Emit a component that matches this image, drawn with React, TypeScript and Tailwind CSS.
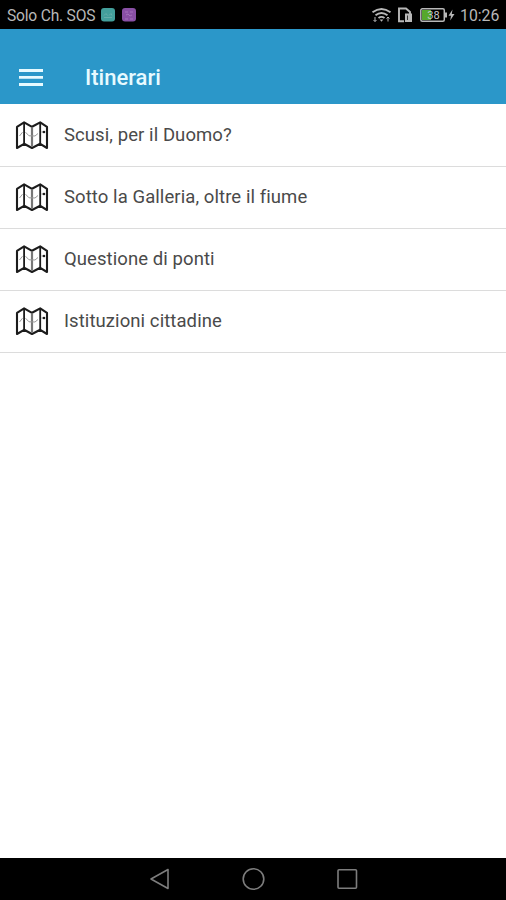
const itineraries = [
  'Scusi, per il Duomo?',
  'Sotto la Galleria, oltre il fiume',
  'Questione di ponti',
  'Istituzioni cittadine',
];

function MapIcon() {
  return (
    <svg className="block shrink-0" width="34" height="30" viewBox="0 0 34 30" fill="none" stroke="#1c1c1c" strokeWidth="2.1" strokeLinejoin="round">
      <path d="M2 6.8 9.1 2.4 17 6.8 25.2 2.4 32 6.8V28L25.2 23.8 17 28 9.1 23.8 2 28Z" />
      <path d="M9.1 2.5V24M25.2 2.5V24" strokeWidth="1.8" />
      <path d="M17 7.5V27" stroke="#777" strokeWidth="2.2" />
      <path d="M4.5 16 7.5 12.2M10.5 12.2 14 15.8 20 16 23 13.5" stroke="#999" strokeWidth="1" />
      <path d="M26.5 12H28.5" stroke="#888" strokeWidth="1" />
      <circle cx="29" cy="12" r="1.3" fill="#1c1c1c" stroke="none" />
    </svg>
  );
}

function StatusBar() {
  return (
    <div className="flex h-[29px] shrink-0 items-center bg-black pl-[7px] pr-[6px] text-[#b8b8b8]">
      <span className="mt-[3px] w-[94px] whitespace-nowrap text-[15.6px] leading-[16px] tracking-[-0.2px]">Solo Ch. SOS</span>
      <svg className="block" width="36" height="16" viewBox="0 0 36 16">
        <rect x="0" y="1" width="14" height="13.5" rx="3" fill="#439f9b" />
        <path d="M3 8.5 5 6.5 6.5 8.5M8 8.5 10 6.5 11 8.5M3 10.5H11" stroke="#66aeaa" fill="none" />
        <rect x="21" y="1" width="14" height="13.5" rx="3" fill="#8950a5" />
        <path d="M24 5H27M29 5H32M25 8 27 7 29 9 31 8M24 12H27M29 12H32" stroke="#a573bc" fill="none" />
      </svg>
      <svg className="ml-auto mr-[5px] block shrink-0" width="84" height="18" viewBox="0 0 84 18" fill="none" stroke="#b8b8b8">
        <path d="M1.5 6.3Q10.5-.3 19.5 6.3M4.5 9.2Q10.5 4.6 16.5 9.2M7.5 12Q10.5 9.8 13.5 12" strokeWidth="1.9" />
        <path d="M8.7 13.5H12.3L10.5 15.8Z" fill="#b8b8b8" stroke="none" />
        <path d="M4 11V15.5M2.5 14 4 15.5 5.5 14M17 15.5V11M15.5 12.5 17 11 18.5 12.5" strokeWidth="1" />
        <path d="M33 15.2H28V2.5H35L39 6V8" strokeWidth="1.9" />
        <path d="M34 7.5H41V16H34Z" fill="#b8b8b8" stroke="none" />
        <path d="M36.5 9.5V14" stroke="#333" />
        <rect x="49.8" y="2.8" width="23.5" height="12.4" rx="1.5" strokeWidth="1.5" />
        <rect x="51" y="4" width="9" height="10" fill="#56a82b" stroke="none" />
        <rect x="74" y="6.5" width="2" height="5" fill="#b8b8b8" stroke="none" />
        <text x="62.5" y="13" textAnchor="middle" fontSize="11" fill="#c8c8c8" stroke="none">38</text>
        <path d="M81.5 3.5 77.5 9.8H80L79.2 14.5 83.5 8H80.8Z" fill="#b8b8b8" stroke="none" />
      </svg>
      <span className="mt-[2px] w-[40px] whitespace-nowrap text-[15.8px] leading-none">10:26</span>
    </div>
  );
}

export default function App() {
  return (
    <div className="flex h-[900px] w-[506px] flex-col overflow-hidden bg-white font-['Roboto',sans-serif]">
      <StatusBar />
      <header className="flex h-[75px] shrink-0 items-end bg-[#2b97c9] pb-[14px] pl-[19px] text-[#e7faff]">
        <svg className="mb-[2px] block" width="24" height="20" viewBox="0 0 24 20" fill="currentColor">
          <path d="M0 1H24V4H0ZM0 8H24V10.7H0ZM0 15H24V18H0Z" />
        </svg>
        <h1 className="ml-[42px] text-[22px] font-medium leading-[24px]">Itinerari</h1>
      </header>
      <main className="flex-1">
        <ul className="pt-px">
          {itineraries.map((name) => (
            <li key={name} className="flex h-[62px] items-center border-b border-[#dcdcdc] pb-px pl-[15px] text-[#4a4a4a]">
              <MapIcon />
              <span className="ml-[15px] text-[18.5px] leading-[24px] tracking-[0.08px]">{name}</span>
            </li>
          ))}
        </ul>
      </main>
      <nav className="flex h-[42px] shrink-0 items-center justify-center bg-black">
        <svg className="block" width="210" height="24" viewBox="0 0 210 24" fill="none" stroke="#7d7d7d" strokeWidth="1.6">
          <path d="M20 2.5V21.5L3 12Z" strokeLinejoin="round" />
          <circle cx="105.5" cy="12" r="10.3" />
          <rect x="190" y="2.7" width="18.5" height="18.6" rx="1" />
        </svg>
      </nav>
    </div>
  );
}
